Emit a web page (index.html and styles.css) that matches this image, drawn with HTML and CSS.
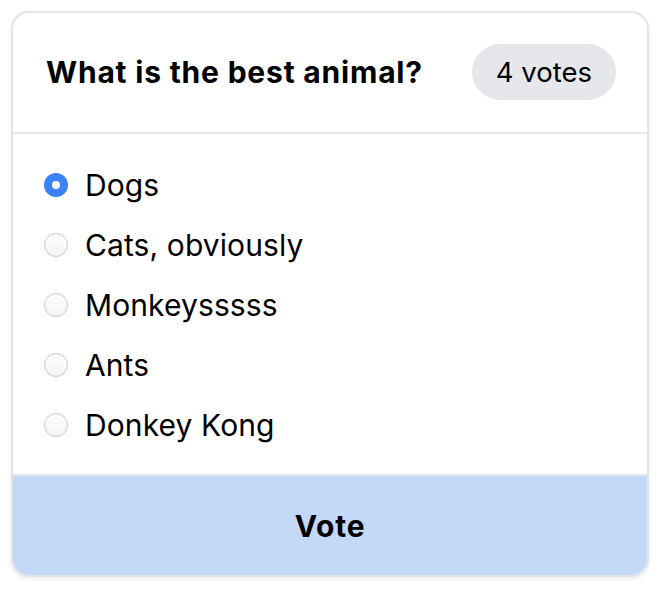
FILE: index.html
```html
<!DOCTYPE html>
<html>
<head>
<meta charset="utf-8">
<link rel="stylesheet" href="styles.css">
</head>
<body>
<div class="card">
  <div class="header">
    <h2 class="title">What is the best animal?</h2>
    <span class="badge">4 votes</span>
  </div>
  <div class="options">
    <label class="option"><input type="radio" name="a" class="radio" checked><span>Dogs</span></label>
    <label class="option"><input type="radio" name="a" class="radio"><span>Cats, obviously</span></label>
    <label class="option"><input type="radio" name="a" class="radio"><span>Monkeysssss</span></label>
    <label class="option"><input type="radio" name="a" class="radio"><span>Ants</span></label>
    <label class="option"><input type="radio" name="a" class="radio"><span>Donkey Kong</span></label>
  </div>
  <button class="vote">Vote</button>
</div>
</body>
</html>
```
FILE: styles.css
```css
* { box-sizing: border-box; }
html, body { margin: 0; padding: 0; background: #ffffff; }
body {
  padding: 11px;
  font-family: Inter, "Liberation Sans", sans-serif;
  color: #000;
}
.card {
  border: 2px solid #e3e4e8;
  border-radius: 18px;
  overflow: hidden;
  box-shadow: 0 2px 4px rgba(0,0,0,0.07);
  display: flex;
  flex-direction: column;
}
.header {
  display: flex;
  align-items: center;
  justify-content: space-between;
  padding: 31px 31px 32px 33px;
  border-bottom: 2px solid #e5e7eb;
}
.title {
  margin: 0;
  font-size: 30px;
  font-weight: 700;
  letter-spacing: 0.8px;
  line-height: 36px;
}
.badge {
  background: #e5e7eb;
  border-radius: 28px;
  height: 56px;
  padding: 0 24px;
  display: flex;
  align-items: center;
  font-size: 27.5px;
}
.options {
  display: flex;
  flex-direction: column;
  gap: 20px;
  padding: 31px 32px 29px 31px;
  border-bottom: 2px solid #e5e7eb;
}
.option {
  display: flex;
  align-items: center;
  gap: 17px;
  height: 40px;
  font-size: 30px;
  letter-spacing: 0.1px;
}
.radio {
  appearance: none;
  -webkit-appearance: none;
  margin: 0;
  width: 24px;
  height: 24px;
  border-radius: 50%;
  border: 1.5px solid #c8c8c8;
  background: linear-gradient(#ffffff, #f4f4f4);
  flex: none;
}
.radio:checked {
  border: 8px solid #3b82f6;
  background: #ffffff;
}
.vote {
  border: none;
  margin: 0;
  height: 99px;
  background: #c4d9f8;
  font-family: inherit;
  font-size: 30px;
  font-weight: 700;
  letter-spacing: 0.8px;
  color: #000;
}
```
